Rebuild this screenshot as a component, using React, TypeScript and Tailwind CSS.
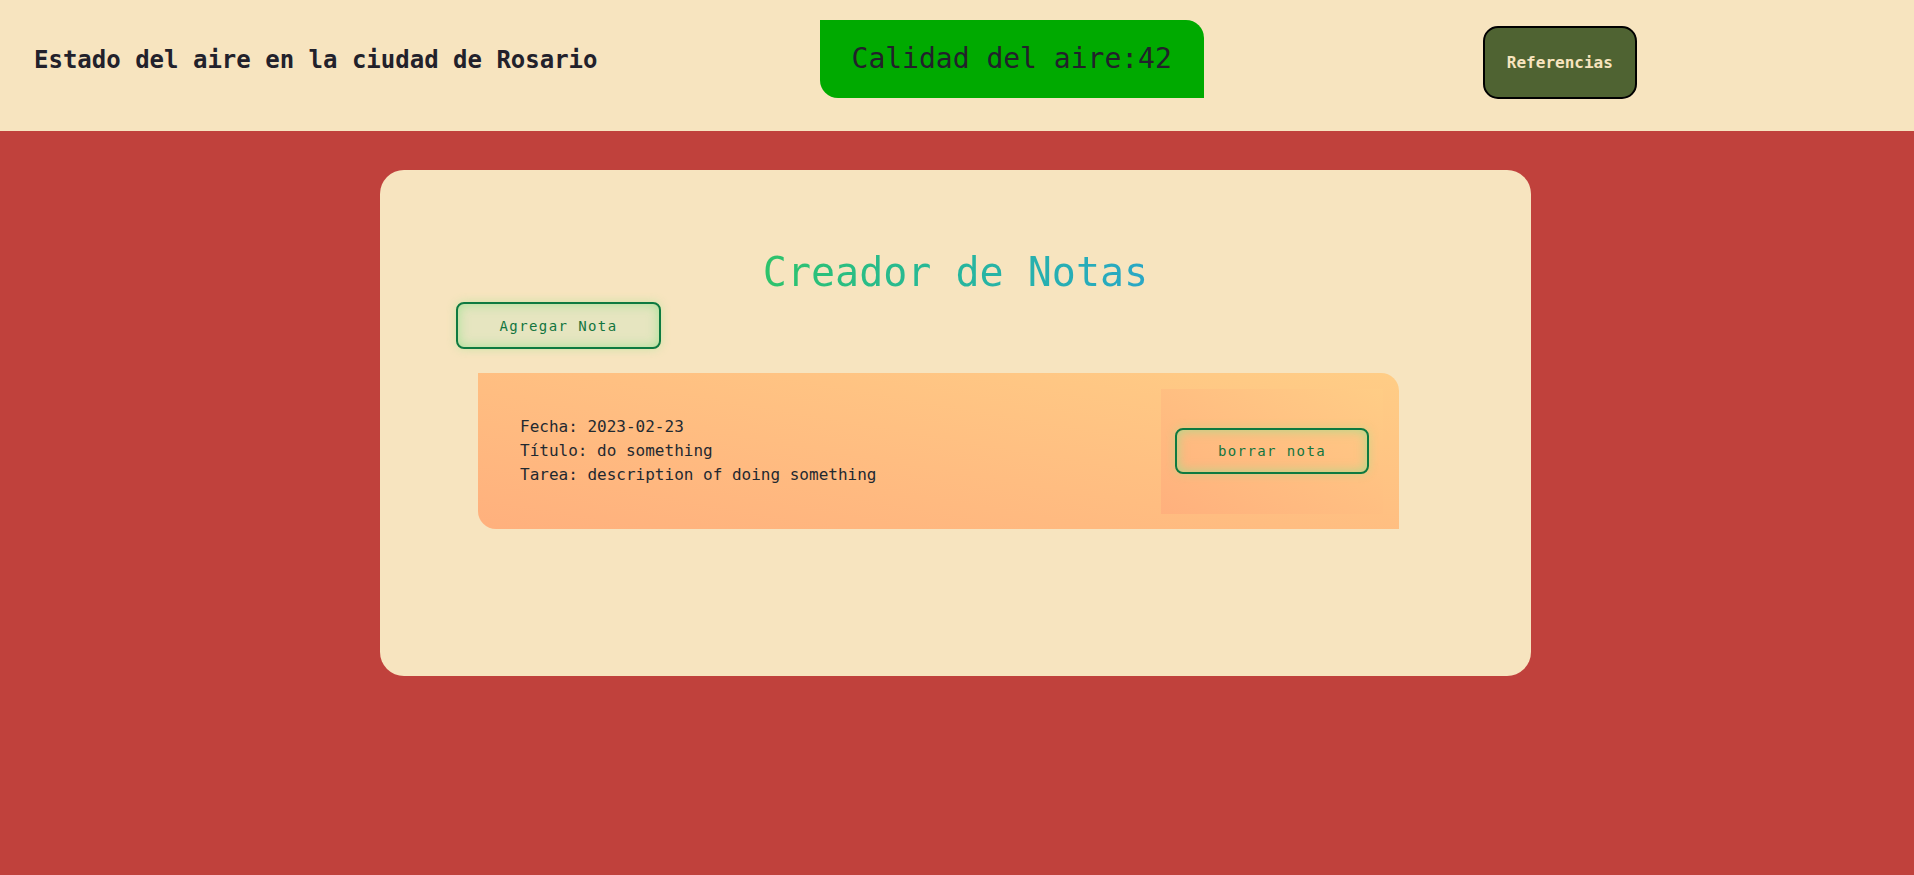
import React from 'react';

const mono = { fontFamily: '"DejaVu Sans Mono", "Liberation Mono", monospace' };

const Header = () => {
    return (
        <header className="h-[131px] bg-[#f7e4bf] flex items-start">
            <h2 className="ml-[34px] mt-[44px] text-2xl leading-8 font-semibold text-[#22212b]">
                Estado del aire en la ciudad de Rosario
            </h2>
            <div className="ml-[222px] mt-[20px] h-[78px] px-8 flex items-center bg-[#00aa00] rounded-tr-[18px] rounded-bl-[18px] text-[28px] text-[#22212b]">
                Calidad del aire:42
            </div>
            <button className="ml-[279px] mt-[26px] h-[73px] w-[154px] border-2 border-black rounded-[15px] bg-[#4f6332] text-[#f7e4be] text-base font-bold">
                Referencias
            </button>
        </header>
    );
};

const Nota = ({ fecha, titulo, tarea }: { fecha: string; titulo: string; tarea: string }) => {
    return (
        <div className="ml-[98px] mt-[24px] w-[921px] h-[156px] flex items-center justify-between rounded-tr-[18px] rounded-bl-[18px] bg-gradient-to-tr from-[#ffb07d] to-[#ffcd86]">
            <div className="pl-[42px] text-base leading-6 text-[#1f2930]">
                <p>Fecha: {fecha}</p>
                <p>Título: {titulo}</p>
                <p>Tarea: {tarea}</p>
            </div>
            <div className="mr-[16px] w-[222px] h-[125px] flex items-center justify-center bg-gradient-to-tr from-[#ffb07d] to-[#ffcd86]">
                <button className="w-[194px] h-[46px] border-2 border-[#0d7a40] rounded-[8px] text-sm tracking-widest text-[#13753f] shadow-[0_0_10px_rgba(150,230,140,0.45),inset_0_0_12px_rgba(150,225,140,0.8)]">
                    borrar nota
                </button>
            </div>
        </div>
    );
};

export default function App() {
    return (
        <div className="min-h-screen bg-[#c0413c]" style={mono}>
            <Header />
            <main className="pt-[39px]">
                <section className="ml-[380px] w-[1151px] h-[506px] rounded-[24px] bg-[#f7e4bf] pt-[78px] flex flex-col">
                    <div className="flex justify-center">
                        <h1 className="w-fit text-[40px] leading-[48px] bg-gradient-to-r from-[#2ec36a] to-[#2aa7c6] bg-clip-text text-transparent">
                            Creador de Notas
                        </h1>
                    </div>
                    <button className="ml-[76px] mt-[6px] w-[205px] h-[47px] border-2 border-[#0d7a40] rounded-[8px] text-sm tracking-widest text-[#13753f] bg-[#e6e5c0] shadow-[0_0_10px_rgba(150,230,140,0.45),inset_0_0_12px_rgba(150,225,140,0.8)]">
                        Agregar Nota
                    </button>
                    <Nota fecha="2023-02-23" titulo="do something" tarea="description of doing something" />
                </section>
            </main>
        </div>
    );
}
